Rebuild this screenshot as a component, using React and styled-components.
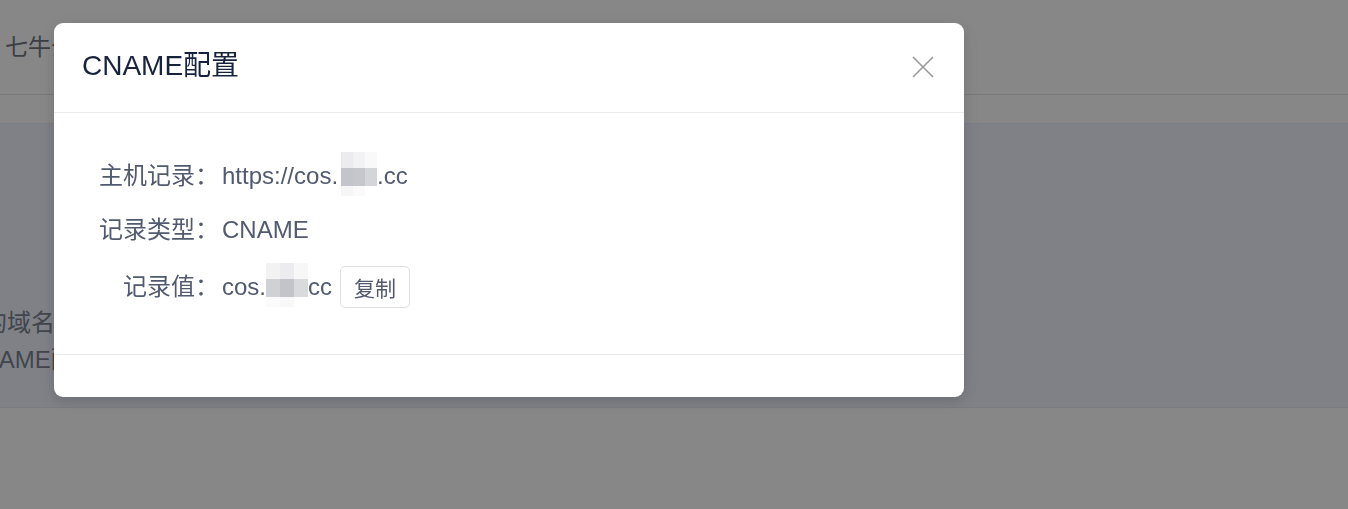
import React from 'react'
import styled, { createGlobalStyle } from 'styled-components'

const GlobalStyle = createGlobalStyle`
    html, body {
        margin: 0;
        padding: 0;
        background: #ffffff;
        overflow: hidden;
    }
    body {
        font-family: "Liberation Sans", "Noto Sans CJK SC", sans-serif;
        color: #515a6e;
    }
`;

const Page = styled.div`
    width: 1348px;
    height: 509px;
    overflow: hidden;
`;

const TopBar = styled.div`
    height: 95px;
    display: flex;
    align-items: center;
    padding-left: 5px;
    padding-bottom: 4px;
    box-sizing: border-box;
    border-bottom: 1px solid #dedede;
    font-size: 23px;
    color: #444a56;
`;

const Band = styled.div`
    margin-top: 28px;
    height: 285px;
    box-sizing: border-box;
    padding-top: 180px;
    background: #eaeffd;
    border-top: 1px solid #dde5fb;
    border-bottom: 1px solid #dde3f0;
`;

const BandLine = styled.div`
    font-size: 24px;
    line-height: 37px;
    white-space: nowrap;
    color: #515a6e;
    margin-left: ${(p) => p.shift}px;
`;

const Overlay = styled.div`
    position: fixed;
    inset: 0;
    background: rgba(55, 55, 55, 0.6);
`;

const Dialog = styled.div`
    width: 910px;
    margin: 23px 0 0 54px;
    background: #ffffff;
    border-radius: 9px;
    box-shadow: 0 4px 14px rgba(0, 0, 0, 0.15);
    overflow: hidden;
`;

const Header = styled.div`
    height: 90px;
    box-sizing: border-box;
    display: flex;
    align-items: center;
    justify-content: space-between;
    padding: 0 30px 3px 28px;
    border-bottom: 1px solid #e8eaec;
`;

const Title = styled.div`
    font-size: 28px;
    line-height: 36px;
    color: #17233d;
`;

const CloseBtn = styled.div`
    width: 22px;
    height: 22px;
    display: flex;
    margin-top: 1px;
    cursor: pointer;
`;

const Body = styled.div`
    height: 241px;
    box-sizing: border-box;
    padding: 45px 45px 0;
    display: flex;
    flex-direction: column;
    gap: 18px;
`;

const Row = styled.div`
    display: flex;
    align-items: center;
    height: ${(p) => p.h || 36}px;
    font-size: 24px;
    line-height: 36px;
`;

const Label = styled.div`
    width: 120px;
    height: 36px;
    text-align: right;
    margin-right: 3px;
    color: #515a6e;
    flex-shrink: 0;
`;

const Value = styled.div`
    display: flex;
    align-items: center;
    height: 36px;
    white-space: nowrap;
    color: #515a6e;
`;

const Blur = styled.span`
    display: inline-grid;
    grid-template-columns: repeat(${(p) => p.cols}, 1fr);
    grid-template-rows: 16px 18px 10px;
    width: ${(p) => p.w}px;
    height: 44px;
    margin: -4px 0 0 ${(p) => p.ml || 0}px;
`;

const Cell = styled.span`
    background: ${(p) => p.c};
`;

const CopyButton = styled.button`
    height: 42px;
    padding: 0 13px;
    margin-left: 8px;
    border: 1px solid #dcdee2;
    border-radius: 5px;
    background: #ffffff;
    font-family: inherit;
    font-size: 21px;
    color: #515a6e;
    cursor: pointer;
`;

const Footer = styled.div`
    height: 42px;
    border-top: 1px solid #e8eaec;
`;

const blurA = [
    '#ececee', '#f2f2f4', '#f9f9fa',
    '#c4c5cb', '#c6c7cc', '#d4d5d9',
    '#f6f6f7', '#fafafb', '#ffffff',
];

const blurB = [
    '#f2f2f3', '#ececee', '#f7f7f8',
    '#d0d1d5', '#c3c4ca', '#d9dadd',
    '#fbfbfc', '#f8f8f9', '#ffffff',
];

const BlurBox = ({ w, ml, colors }) => (
    <Blur cols={3} w={w} ml={ml}>
        {colors.map((c, i) => <Cell key={i} c={c} />)}
    </Blur>
);

const CloseIcon = () => (
    <svg width="22" height="22" viewBox="0 0 22 22">
        <path d="M1 1 L21 21 M21 1 L1 21" stroke="#999999" strokeWidth="1.6" fill="none" />
    </svg>
);

const App = () => {
    return (
        <>
            <GlobalStyle />
            <Page>
                <TopBar>七牛云存储</TopBar>
                <Band>
                    <BandLine shift={-65}>绑定的域名：</BandLine>
                    <BandLine shift={-36}>CNAME配置</BandLine>
                </Band>
            </Page>
            <Overlay>
                <Dialog>
                    <Header>
                        <Title>CNAME配置</Title>
                        <CloseBtn><CloseIcon /></CloseBtn>
                    </Header>
                    <Body>
                        <Row>
                            <Label>主机记录：</Label>
                            <Value>
                                https://cos.
                                <BlurBox w={36} ml={3} colors={blurA} />
                                .cc
                            </Value>
                        </Row>
                        <Row>
                            <Label>记录类型：</Label>
                            <Value>CNAME</Value>
                        </Row>
                        <Row h={42}>
                            <Label>记录值：</Label>
                            <Value>
                                cos.
                                <BlurBox w={42} colors={blurB} />
                                cc
                                <CopyButton>复制</CopyButton>
                            </Value>
                        </Row>
                    </Body>
                    <Footer />
                </Dialog>
            </Overlay>
        </>
    )
}

export default App;
